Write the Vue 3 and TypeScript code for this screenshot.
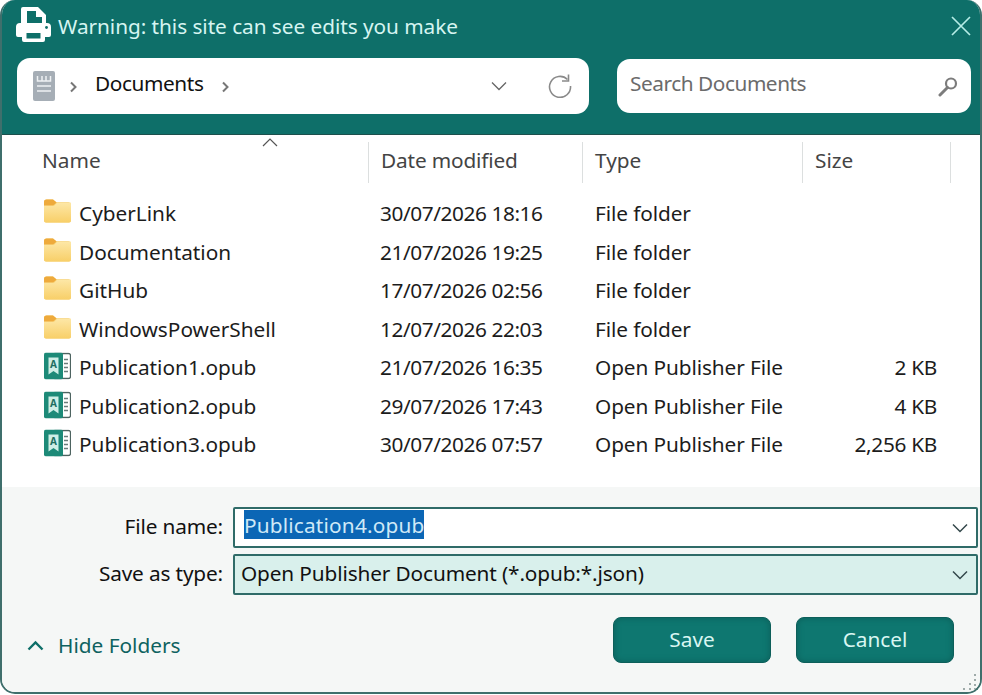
<script setup lang="ts">
interface Row { name: string; date: string; type: string; size: string; kind: 'folder' | 'file' }
const rows: Row[] = [
  { name: 'CyberLink', date: '30/07/2026 18:16', type: 'File folder', size: '', kind: 'folder' },
  { name: 'Documentation', date: '21/07/2026 19:25', type: 'File folder', size: '', kind: 'folder' },
  { name: 'GitHub', date: '17/07/2026 02:56', type: 'File folder', size: '', kind: 'folder' },
  { name: 'WindowsPowerShell', date: '12/07/2026 22:03', type: 'File folder', size: '', kind: 'folder' },
  { name: 'Publication1.opub', date: '21/07/2026 16:35', type: 'Open Publisher File', size: '2 KB', kind: 'file' },
  { name: 'Publication2.opub', date: '29/07/2026 17:43', type: 'Open Publisher File', size: '4 KB', kind: 'file' },
  { name: 'Publication3.opub', date: '30/07/2026 07:57', type: 'Open Publisher File', size: '2,256 KB', kind: 'file' },
]
</script>

<template>
  <div class="window">
    <header class="head">
      <div class="title">
        <svg class="printer" width="38" height="38" viewBox="0 0 38 38">
          <path fill-rule="evenodd" fill="#fff" d="M8 1h15l8 8v10h-4V11h-6V5H12v14H6V3a2 2 0 0 1 2-2z" />
          <path fill="#fff" d="M1 21a4 4 0 0 1 4-4h27a4 4 0 0 1 4 4v8a2 2 0 0 1-2 2h-4v-7H7v7H3a2 2 0 0 1-2-2z" />
          <path fill="#fff" fill-rule="evenodd" d="M7 24h23v10a2 2 0 0 1-2 2H9a2 2 0 0 1-2-2zM11.500 27v5.500h14V27z" />
          <circle cx="31.500" cy="21.500" r="1.400" fill="#0e6f69" />
        </svg>
        <span class="title-text">Warning: this site can see edits you make</span>
        <svg class="close" width="20" height="20" viewBox="0 0 20 20">
          <path d="M1 1l18 18M19 1L1 19" stroke="#b5ece6" stroke-width="1.700" fill="none" />
        </svg>
      </div>
      <div class="bars">
        <div class="crumb">
          <svg class="doc" width="22" height="30" viewBox="0 0 22 30">
            <rect width="22" height="30" rx="2" fill="#a6aeb6" />
            <path d="M4.500 5v5h13V5M9 5v5M13 5v5M4 15h14M4 20h14" stroke="#eef1f3" stroke-width="1.500" fill="none" />
          </svg>
          <svg class="chev" width="9" height="12" viewBox="0 0 9 12"><path d="M2 1.500l4.500 4.500L2 10.500" stroke="#777" stroke-width="2" fill="none" /></svg>
          <span class="crumb-text">Documents</span>
          <svg class="chev chev2" width="9" height="12" viewBox="0 0 9 12"><path d="M2 1.500l4.500 4.500L2 10.500" stroke="#777" stroke-width="2" fill="none" /></svg>
          <svg class="down" width="16" height="10" viewBox="0 0 16 10"><path d="M1 1.500l7 7 7-7" stroke="#666" stroke-width="1.300" fill="none" /></svg>
          <svg class="refresh" width="24" height="24" viewBox="0 0 24 24">
            <path d="M19.500 5.500A10.500 10.500 0 1 0 22.500 12" stroke="#8a8a8a" stroke-width="1.600" fill="none" />
            <path d="M20.500 0.500v6.500H14" stroke="#8a8a8a" stroke-width="1.600" fill="none" />
          </svg>
        </div>
        <div class="search">
          <span class="search-text">Search Documents</span>
          <svg width="20" height="21" viewBox="0 0 20 21">
            <circle cx="13" cy="7.500" r="5" stroke="#7c7c7c" stroke-width="2.200" fill="none" />
            <path d="M9.500 11.500L2 19" stroke="#7c7c7c" stroke-width="3" fill="none" stroke-linecap="round" />
          </svg>
        </div>
      </div>
    </header>

    <section class="list">
      <svg class="sort" width="16" height="9" viewBox="0 0 16 9"><path d="M1 8l7-7 7 7" stroke="#555" stroke-width="1.200" fill="none" /></svg>
      <div class="cols">
        <div class="col c-name">Name</div>
        <div class="col c-date">Date modified</div>
        <div class="col c-type">Type</div>
        <div class="col c-size">Size</div>
      </div>
      <div class="rows">
        <div v-for="r in rows" :key="r.name" class="row">
          <div class="cell c-name name-cell">
            <svg v-if="r.kind === 'folder'" class="ico ico-folder" width="29" height="25" viewBox="0 0 29 26" preserveAspectRatio="none">
              <defs>
                <linearGradient id="fold" x1="0" y1="0" x2="0" y2="1">
                  <stop offset="0" stop-color="#fde7a6" />
                  <stop offset="1" stop-color="#f8cf68" />
                </linearGradient>
              </defs>
              <path d="M1 3.500A2.500 2.500 0 0 1 3.500 1h6.500l3.500 3h12A2.500 2.500 0 0 1 28 6.500V23a2 2 0 0 1-2 2H3a2 2 0 0 1-2-2z" fill="#f6cd6a" />
              <path d="M1 3.500A2.500 2.500 0 0 1 3.500 1h6.500l3.500 3.200-3.500 3H1z" fill="#eeaa3c" />
              <path d="M1 7.500h10l3-3h14V23a2 2 0 0 1-2 2H3a2 2 0 0 1-2-2z" fill="url(#fold)" />
            </svg>
            <svg v-else class="ico ico-file" width="27" height="27" viewBox="0 0 27 27">
              <rect x="9" y="1" width="17.500" height="25" rx="2" fill="#fff" stroke="#4d6360" stroke-width="1.300" />
              <path d="M20 7h4M20 11h4M20 15h4M20 19h4" stroke="#6b7d7b" stroke-width="1.500" />
              <rect x="0" y="0" width="19" height="27" rx="2" fill="#1d8a78" />
              <path d="M4.500 5h10v17l-5-3.500-5 3.500z" fill="#cfeee6" />
              <text x="9.500" y="15" class="ico-a">A</text>
            </svg>
            <span>{{ r.name }}</span>
          </div>
          <div class="cell c-date date-cell">{{ r.date }}</div>
          <div class="cell c-type type-cell">{{ r.type }}</div>
          <div class="cell c-size size-cell">{{ r.size }}</div>
        </div>
      </div>
    </section>

    <footer class="foot">
      <div class="form-row">
        <label class="lbl">File name:</label>
        <div class="field name-field">
          <span class="sel">Publication4.opub</span>
          <svg class="fdown" width="16" height="10" viewBox="0 0 16 10"><path d="M1 1.500l7 7 7-7" stroke="#33474a" stroke-width="1.500" fill="none" /></svg>
        </div>
      </div>
      <div class="form-row">
        <label class="lbl">Save as type:</label>
        <div class="field type-field">
          <span class="type-text">Open Publisher Document (*.opub:*.json)</span>
          <svg class="fdown" width="16" height="10" viewBox="0 0 16 10"><path d="M1 1.500l7 7 7-7" stroke="#33474a" stroke-width="1.500" fill="none" /></svg>
        </div>
      </div>
      <div class="actions">
        <div class="hide">
          <svg width="17" height="11" viewBox="0 0 17 11"><path d="M1.500 9.500l7-7 7 7" stroke="#0e6f69" stroke-width="2.400" fill="none" /></svg>
          <span>Hide Folders</span>
        </div>
        <button class="btn save">Save</button>
        <button class="btn cancel">Cancel</button>
      </div>
      <svg class="grip" width="16" height="18" viewBox="0 0 16 18">
        <g fill="#8a9896">
          <circle cx="14" cy="2" r="1.100" /><circle cx="14" cy="7" r="1.100" /><circle cx="14" cy="12" r="1.100" /><circle cx="14" cy="16" r="1.100" />
          <circle cx="9" cy="11" r="1.100" /><circle cx="9" cy="16" r="1.100" /><circle cx="3" cy="16" r="1.100" />
        </g>
      </svg>
    </footer>
  </div>
</template>

<style>
html, body { margin: 0; background: #ffffff; }
</style>

<style scoped>
.window {
  width: 982px;
  height: 694px;
  box-sizing: border-box;
  border: 2px solid #3f6f6c;
  border-top: 0;
  border-radius: 15px;
  overflow: hidden;
  display: flex;
  flex-direction: column;
  font-family: "Noto Sans", "Open Sans", sans-serif;
  font-size: 20.800px;
  color: #1a1a1a;
  background: #f5f7f6;
}
.head {
  height: 135px;
  box-sizing: border-box;
  background: #0e6f69;
  padding: 7px 9px 0 13px;
  border-bottom: 1px solid #1c4f4c;
  flex: none;
}
.title {
  display: flex;
  align-items: center;
  height: 38px;
}
.printer { flex: none; margin-right: 5px; margin-top: -3px; }
.title-text { color: #d6f5f1; flex: 1; margin-top: -1px; letter-spacing: -0.050px; }
.bars {
  display: flex;
  gap: 28px;
  margin-top: 13px;
  padding-left: 2px;
}
.crumb {
  width: 572px;
  height: 56px;
  box-sizing: border-box;
  background: #fff;
  border-radius: 13px;
  display: flex;
  align-items: center;
  padding-left: 16px;
}
.doc { flex: none; }
.chev { margin-left: 14px; flex: none; margin-top: 1px; }
.crumb-text { margin-left: 17px; color: #111; margin-top: -7px; letter-spacing: -0.400px; }
.chev2 { margin-left: 17px; }
.down { margin-left: auto; }
.refresh { margin: 0 17px 0 41px; }
.search {
  width: 354px;
  height: 54px;
  box-sizing: border-box;
  margin-top: 1px;
  background: #fff;
  border-radius: 13px;
  display: flex;
  align-items: center;
  justify-content: space-between;
  padding: 0 13px;
  color: #6b6b6b;
}
.search-text { margin-top: -7px; letter-spacing: -0.450px; }
.list {
  position: relative;
  height: 352px;
  flex: none;
  background: #fff;
}
.sort { position: absolute; left: 260px; top: 3px; }
.cols {
  display: flex;
  height: 41px;
  margin-top: 7px;
  color: #444;
}
.col {
  box-sizing: border-box;
  height: 41px;
  line-height: 37px;
  border-right: 1px solid #dcdfdf;
}
.c-name { width: 367px; padding-left: 40px; box-sizing: border-box; flex: none; }
.c-date { width: 214px; padding-left: 12px; box-sizing: border-box; flex: none; }
.c-type { width: 220px; padding-left: 12px; box-sizing: border-box; flex: none; }
.c-size { width: 148px; padding-left: 12px; box-sizing: border-box; flex: none; }
.col.c-date { letter-spacing: -0.150px; }
.rows { margin-top: 11px; }
.row {
  display: flex;
  height: 38.500px;
  align-items: center;
  color: #1c1c1c;
}
.name-cell { display: flex; align-items: center; position: relative; padding-left: 77px; }
.date-cell { letter-spacing: -0.420px; padding-left: 11px; }
.type-cell { letter-spacing: -0.100px; }
.ico { position: absolute; left: 41px; top: 50%; transform: translateY(-50%); }
.ico-folder { margin-top: -2px; }
.ico-file { margin-top: -1px; left: 42px; }
.ico-a { font-size: 10px; font-weight: 700; fill: #1d6f62; text-anchor: middle; font-family: "Noto Sans", sans-serif; }
.size-cell { text-align: right; padding: 0 14px 0 0; letter-spacing: -0.300px; }
.foot {
  position: relative;
  flex: 1;
  background: #f5f7f6;
  padding-top: 19px;
}
.form-row {
  display: flex;
  align-items: center;
  height: 42px;
  margin-bottom: 5px;
}
.lbl { width: 221px; text-align: right; margin-right: 10px; color: #111; flex: none; margin-top: -3px; letter-spacing: -0.150px; }
.field {
  width: 745px;
  height: 41px;
  box-sizing: border-box;
  border: 2px solid #2f6b68;
  border-radius: 2px;
  display: flex;
  align-items: center;
  position: relative;
  color: #111;
}
.name-field { background: #fff; padding-left: 9px; }
.type-field { background: #d9f0ec; padding-left: 6px; }
.type-text { margin-top: -3px; letter-spacing: -0.130px; }
.sel { background: #0b66b5; color: #cfe9f7; height: 29px; line-height: 31px; margin-top: -5px; letter-spacing: 0.180px; }
.fdown { position: absolute; right: 8px; top: 14px; }
.actions {
  display: flex;
  align-items: center;
  margin-top: 22px;
}
.hide {
  display: flex;
  align-items: center;
  gap: 14px;
  color: #0e6260;
  margin-left: 25px;
  margin-top: 10px;
  flex: 1;
}
.btn {
  width: 158px;
  height: 46px;
  border: 1px solid #0d5f5a;
  border-radius: 8px;
  background: #0e7770;
  box-shadow: inset 0 0 6px #0c5f5a;
  color: #d9f6f2;
  font: inherit;
  padding: 0 0 2px;
}
.save { margin-right: 25px; }
.cancel { margin-right: 26px; }
.grip { position: absolute; right: 3px; bottom: 1px; }
</style>
